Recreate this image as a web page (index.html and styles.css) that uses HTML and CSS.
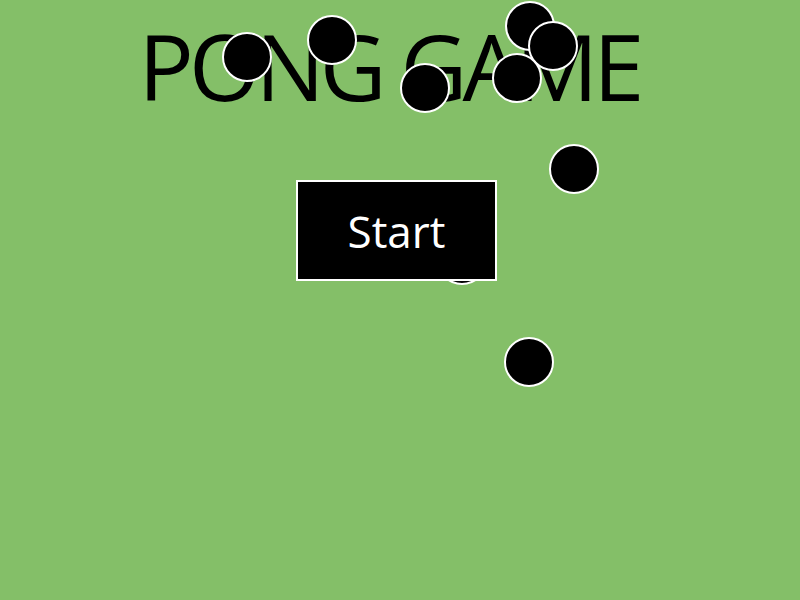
FILE: index.html
```html
<!DOCTYPE html>
<html>
<head>
<meta charset="utf-8">
<link rel="stylesheet" href="styles.css">
</head>
<body>
<div class="stage">
  <h1 class="title">PONG GAME</h1>
  <div class="menu">
    <button class="start">Start</button>
  </div>
  <div class="ball" style="left:222px;top:32px"></div>
  <div class="ball" style="left:307px;top:15px"></div>
  <div class="ball" style="left:400px;top:63px"></div>
  <div class="ball" style="left:505px;top:1px"></div>
  <div class="ball" style="left:528px;top:21px"></div>
  <div class="ball" style="left:492px;top:53px"></div>
  <div class="ball" style="left:549px;top:144px"></div>
  <div class="ball" style="left:437px;top:235px"></div>
  <div class="ball" style="left:504px;top:337px"></div>
</div>
</body>
</html>
```
FILE: styles.css
```css
html, body {
  margin: 0;
  padding: 0;
  width: 800px;
  height: 600px;
  overflow: hidden;
  background: #84bf68;
}
.stage {
  position: relative;
  width: 800px;
  height: 600px;
  font-family: "Open Sans", sans-serif;
}
.title {
  margin: 0;
  padding-top: 6px;
  padding-right: 22px;
  font-weight: 400;
  font-size: 92px;
  letter-spacing: -5px;
  line-height: 120px;
  text-align: center;
  color: #000;
}
.menu {
  display: flex;
  justify-content: center;
  padding-top: 54px;
  padding-right: 7px;
}
.start {
  position: relative;
  z-index: 2;
  width: 201px;
  height: 101px;
  background: #000;
  color: #fff;
  border: 2px solid #fff;
  font-family: "Open Sans", sans-serif;
  font-size: 44px;
  padding: 0;
}
.ball {
  position: absolute;
  width: 46px;
  height: 46px;
  border-radius: 50%;
  background: #000;
  border: 2px solid #fff;
  z-index: 1;
}
```
